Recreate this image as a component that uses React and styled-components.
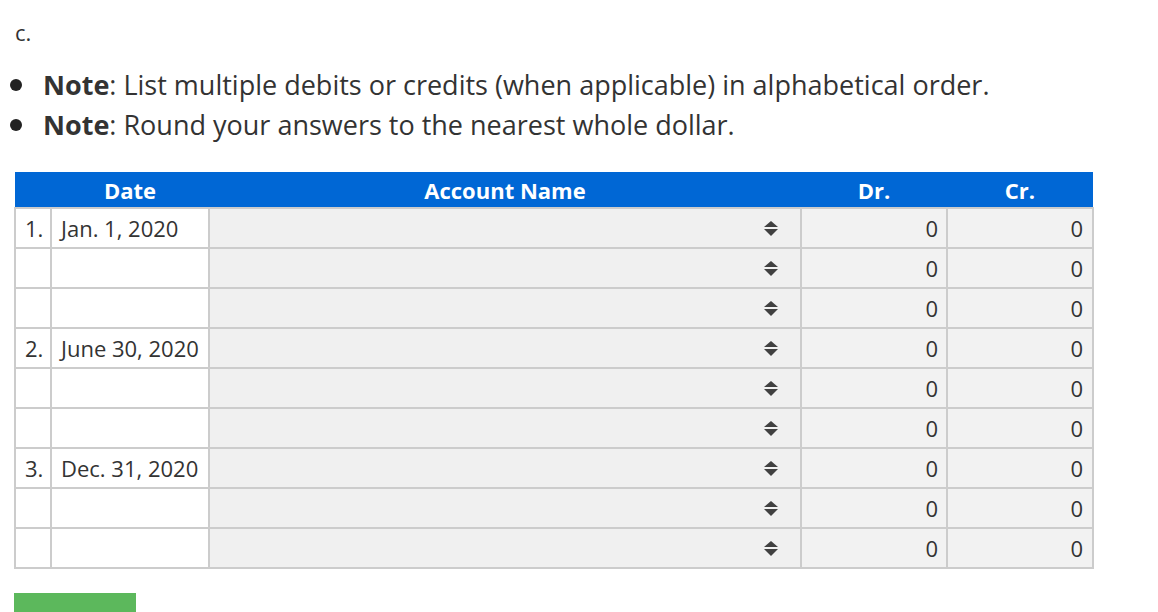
import React from 'react';
import styled, { createGlobalStyle } from 'styled-components';

const GlobalStyle = createGlobalStyle`
  body {
    margin: 0;
    background: #ffffff;
    font-family: "Open Sans", "Noto Sans", sans-serif;
    color: #333333;
  }
`;

const Page = styled.div`
  padding: 18px 14px 0 14px;
`;

const PartLabel = styled.div`
  font-size: 22px;
  line-height: 28px;
  padding-left: 1px;
`;

const NoteList = styled.ul`
  list-style: none;
  margin: 19px 0 0 0;
  padding: 0;
`;

const NoteItem = styled.li`
  display: flex;
  align-items: center;
  font-size: 27px;
  line-height: 40px;
`;

const Bullet = styled.span`
  width: 12px;
  height: 12px;
  border-radius: 50%;
  background: #222222;
  margin: 0 21px 0 -4px;
  flex: none;
`;

const Table = styled.table`
  margin-top: 27px;
  border-collapse: collapse;
  table-layout: fixed;
  width: 1078px;
`;

const HeadCell = styled.th`
  background: #0067d5;
  color: #ffffff;
  font-size: 22px;
  font-weight: 700;
  height: 35px;
  padding: 0;
  text-align: center;
`;

const Cell = styled.td`
  border: 2px solid #cccccc;
  height: 38px;
  padding: 0 ${(p) => p.$padRight || 8}px 0 ${(p) => p.$padLeft || 8}px;
  font-size: 22px;
  background: ${(p) => p.$bg || '#ffffff'};
  text-align: ${(p) => p.$align || 'left'};
  white-space: nowrap;
`;

const SelectInner = styled.div`
  display: flex;
  justify-content: flex-end;
  align-items: center;
`;

const GreenButton = styled.div`
  margin-top: 24px;
  width: 122px;
  height: 24px;
  background: #5cb85c;
`;

const SortArrows = () => (
  <svg width="14" height="15" viewBox="0 0 14 15">
    <polygon points="7,0 14,6 0,6" fill="#404040" />
    <polygon points="0,8 14,8 7,15" fill="#404040" />
  </svg>
);

const rows = [
  { num: '1.', date: 'Jan. 1, 2020' },
  { num: '', date: '' },
  { num: '', date: '' },
  { num: '2.', date: 'June 30, 2020' },
  { num: '', date: '' },
  { num: '', date: '' },
  { num: '3.', date: 'Dec. 31, 2020' },
  { num: '', date: '' },
  { num: '', date: '' },
];

export default function App() {
  return (
    <>
      <GlobalStyle />
      <Page>
        <PartLabel>c.</PartLabel>
        <NoteList>
          <NoteItem>
            <Bullet />
            <span>
              <b>Note</b>: List multiple debits or credits (when applicable) in alphabetical order.
            </span>
          </NoteItem>
          <NoteItem>
            <Bullet />
            <span>
              <b>Note</b>: Round your answers to the nearest whole dollar.
            </span>
          </NoteItem>
        </NoteList>
        <Table>
          <colgroup>
            <col style={{ width: 36 }} />
            <col style={{ width: 158 }} />
            <col style={{ width: 592 }} />
            <col style={{ width: 146 }} />
            <col style={{ width: 146 }} />
          </colgroup>
          <thead>
            <tr>
              <HeadCell />
              <HeadCell>Date</HeadCell>
              <HeadCell>Account Name</HeadCell>
              <HeadCell>Dr.</HeadCell>
              <HeadCell>Cr.</HeadCell>
            </tr>
          </thead>
          <tbody>
            {rows.map((r, i) => (
              <tr key={i}>
                <Cell $padLeft={9} $padRight={4}>{r.num}</Cell>
                <Cell $padLeft={9}>{r.date}</Cell>
                <Cell $bg="#f0f0f0" $padRight={22}>
                  <SelectInner>
                    <SortArrows />
                  </SelectInner>
                </Cell>
                <Cell $bg="#f2f2f2" $align="right">0</Cell>
                <Cell $bg="#f2f2f2" $align="right" $padRight={9}>0</Cell>
              </tr>
            ))}
          </tbody>
        </Table>
        <GreenButton />
      </Page>
    </>
  );
}
